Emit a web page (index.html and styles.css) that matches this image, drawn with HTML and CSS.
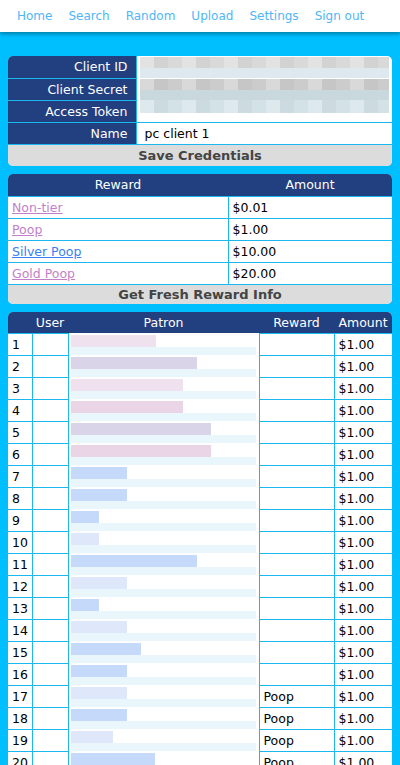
FILE: index.html
```html
<!DOCTYPE html>
<html lang="en">
<head>
    <meta charset="UTF-8">
    <meta name="viewport" content="width=device-width, initial-scale=1.0">
    <title>Patrons</title>
    <link rel="stylesheet" href="styles.css">
</head>
<body>
    <nav class="topnav">
        <a href="#">Home</a>
        <a href="#">Search</a>
        <a href="#">Random</a>
        <a href="#">Upload</a>
        <a href="#">Settings</a>
        <a href="#">Sign out</a>
    </nav>
    <div class="main">
        <div class="panel">
            <table class="creds">
                <tr>
                    <th>Client ID</th>
                    <td class="secret"><div class="px px-gray"></div></td>
                </tr>
                <tr>
                    <th>Client Secret</th>
                    <td class="secret"><div class="px px-dark"></div></td>
                </tr>
                <tr>
                    <th>Access Token</th>
                    <td class="secret"><div class="px px-blue"></div></td>
                </tr>
                <tr>
                    <th>Name</th>
                    <td class="name">pc client 1</td>
                </tr>
            </table>
            <button class="panel-btn">Save Credentials</button>
        </div>

        <div class="panel">
            <table class="rewards">
                <tr>
                    <th>Reward</th>
                    <th class="col-amt">Amount</th>
                </tr>
                <tr><td><a class="visited" href="#">Non-tier</a></td><td>$0.01</td></tr>
                <tr><td><a class="visited" href="#">Poop</a></td><td>$1.00</td></tr>
                <tr><td><a href="#">Silver Poop</a></td><td>$10.00</td></tr>
                <tr><td><a class="visited" href="#">Gold Poop</a></td><td>$20.00</td></tr>
            </table>
            <button class="panel-btn short">Get Fresh Reward Info</button>
        </div>

        <div class="panel">
            <table class="patrons">
                <tr>
                    <th class="c-num"></th>
                    <th class="c-user">User</th>
                    <th class="c-patron">Patron</th>
                    <th class="c-reward">Reward</th>
                    <th class="c-amt">Amount</th>
                </tr>
                <tr><td>1</td><td></td><td class="patron"><div class="bar pink" style="width:85px"></div><div class="band"></div></td><td></td><td>$1.00</td></tr>
                <tr><td>2</td><td></td><td class="patron"><div class="bar lilac" style="width:126px"></div><div class="band"></div></td><td></td><td>$1.00</td></tr>
                <tr><td>3</td><td></td><td class="patron"><div class="bar pink" style="width:112px"></div><div class="band"></div></td><td></td><td>$1.00</td></tr>
                <tr><td>4</td><td></td><td class="patron"><div class="bar rose" style="width:112px"></div><div class="band"></div></td><td></td><td>$1.00</td></tr>
                <tr><td>5</td><td></td><td class="patron"><div class="bar lilac" style="width:140px"></div><div class="band"></div></td><td></td><td>$1.00</td></tr>
                <tr><td>6</td><td></td><td class="patron"><div class="bar rose" style="width:140px"></div><div class="band"></div></td><td></td><td>$1.00</td></tr>
                <tr><td>7</td><td></td><td class="patron"><div class="bar blue" style="width:56px"></div><div class="band"></div></td><td></td><td>$1.00</td></tr>
                <tr><td>8</td><td></td><td class="patron"><div class="bar blue" style="width:56px"></div><div class="band"></div></td><td></td><td>$1.00</td></tr>
                <tr><td>9</td><td></td><td class="patron"><div class="bar blue" style="width:28px"></div><div class="band"></div></td><td></td><td>$1.00</td></tr>
                <tr><td>10</td><td></td><td class="patron"><div class="bar pale" style="width:28px"></div><div class="band"></div></td><td></td><td>$1.00</td></tr>
                <tr><td>11</td><td></td><td class="patron"><div class="bar blue" style="width:126px"></div><div class="band"></div></td><td></td><td>$1.00</td></tr>
                <tr><td>12</td><td></td><td class="patron"><div class="bar pale" style="width:56px"></div><div class="band"></div></td><td></td><td>$1.00</td></tr>
                <tr><td>13</td><td></td><td class="patron"><div class="bar blue" style="width:28px"></div><div class="band"></div></td><td></td><td>$1.00</td></tr>
                <tr><td>14</td><td></td><td class="patron"><div class="bar pale" style="width:56px"></div><div class="band"></div></td><td></td><td>$1.00</td></tr>
                <tr><td>15</td><td></td><td class="patron"><div class="bar blue" style="width:70px"></div><div class="band"></div></td><td></td><td>$1.00</td></tr>
                <tr><td>16</td><td></td><td class="patron"><div class="bar blue" style="width:56px"></div><div class="band"></div></td><td></td><td>$1.00</td></tr>
                <tr><td>17</td><td></td><td class="patron"><div class="bar pale" style="width:56px"></div><div class="band"></div></td><td>Poop</td><td>$1.00</td></tr>
                <tr><td>18</td><td></td><td class="patron"><div class="bar blue" style="width:56px"></div><div class="band"></div></td><td>Poop</td><td>$1.00</td></tr>
                <tr><td>19</td><td></td><td class="patron"><div class="bar pale" style="width:42px"></div><div class="band"></div></td><td>Poop</td><td>$1.00</td></tr>
                <tr><td>20</td><td></td><td class="patron"><div class="bar blue" style="width:84px"></div><div class="band"></div></td><td>Poop</td><td>$1.00</td></tr>
                <tr><td>21</td><td></td><td class="patron"><div class="bar blue" style="width:56px"></div><div class="band"></div></td><td>Poop</td><td>$1.00</td></tr>
                <tr><td>22</td><td></td><td class="patron"><div class="bar pale" style="width:70px"></div><div class="band"></div></td><td>Poop</td><td>$1.00</td></tr>
            </table>
        </div>
    </div>
</body>
</html>
```

FILE: styles.css
```css
* {
    box-sizing: border-box;
}

body {
    margin: 0;
    background-color: #00bfff;
    font-family: "DejaVu Sans", Verdana, sans-serif;
    font-size: 12.5px;
    color: black;
}

/* top navigation */
.topnav {
    display: flex;
    align-items: center;
    height: 32px;
    padding-left: 9px;
    background-color: white;
    box-shadow: 0 2px 4px rgba(0, 0, 0, 0.35);
}

.topnav a {
    padding: 0 8px;
    font-size: 12px;
    color: #4fb6f7;
    text-decoration: none;
}

.main {
    padding: 24px 8px 0;
}

.panel {
    margin-bottom: 8px;
    background-color: white;
    border-radius: 5px;
    overflow: hidden;
}

table {
    width: 100%;
    border-collapse: collapse;
    table-layout: fixed;
}

th {
    height: 22px;
    padding: 0;
    background-color: #22407f;
    color: white;
    font-weight: normal;
}

td {
    height: 22px;
    padding: 0 4px;
    border-top: 1px solid #1ab8ee;
    border-left: 1px solid #1ab8ee;
    white-space: nowrap;
    overflow: hidden;
}

td:first-child {
    border-left: none;
}

a {
    color: #3b80f2;
}

a.visited {
    color: #c47fc9;
}

/* credentials */
.creds th {
    width: 128px;
    padding-right: 8px;
    text-align: right;
    border-top: 1px solid #1ab8ee;
}

.creds tr:first-child th {
    border-top: none;
}

.creds td.secret {
    padding: 0 3px;
    border-top: none;
}

.creds td.name {
    padding-left: 8px;
}

.px {
    height: 21px;
    background-image:
        repeating-linear-gradient(90deg, rgba(255, 255, 255, 0.25) 0 14px, rgba(0, 0, 0, 0.03) 14px 28px, rgba(255, 255, 255, 0) 28px 42px);
}

.px-gray {
    margin-top: 1px;
    background-color: #d9d9d9;
    box-shadow: inset 0 -10px 0 #dde9ee;
}

.px-dark {
    background-color: #cccccc;
    box-shadow: inset 0 -10px 0 #c8d8dd;
}

.px-blue {
    background-color: #d3e2e7;
    box-shadow: inset 0 -8px 0 #ffffff;
}

.panel-btn {
    display: block;
    width: 100%;
    height: 22px;
    padding: 0;
    border: none;
    border-top: 1px solid #1ab8ee;
    background-color: #dcdcdc;
    color: #444;
    font-family: "DejaVu Sans", Verdana, sans-serif;
    font-size: 13px;
    font-weight: bold;
    cursor: pointer;
}

.panel-btn.short {
    height: 20px;
}

/* rewards */
.rewards .col-amt {
    width: 164px;
}

/* patrons */
.patrons th {
    height: 21px;
}

.patrons .c-num { width: 24px; }
.patrons .c-user { width: 36px; }
.patrons .c-reward { width: 75px; }
.patrons .c-amt { width: 58px; }

.patrons td.patron {
    padding: 0 2px;
    border-top: none;
    vertical-align: top;
}

.bar {
    height: 12px;
    margin-top: 2px;
}

.band {
    width: 185px;
    height: 8px;
    background-color: #e9f6fc;
}

.bar.pink { background-color: #efe2ee; }
.bar.rose { background-color: #ead5e6; }
.bar.lilac { background-color: #d9d4e8; }
.bar.blue { background-color: #c5d9fb; }
.bar.pale { background-color: #dfe7fb; }
```
